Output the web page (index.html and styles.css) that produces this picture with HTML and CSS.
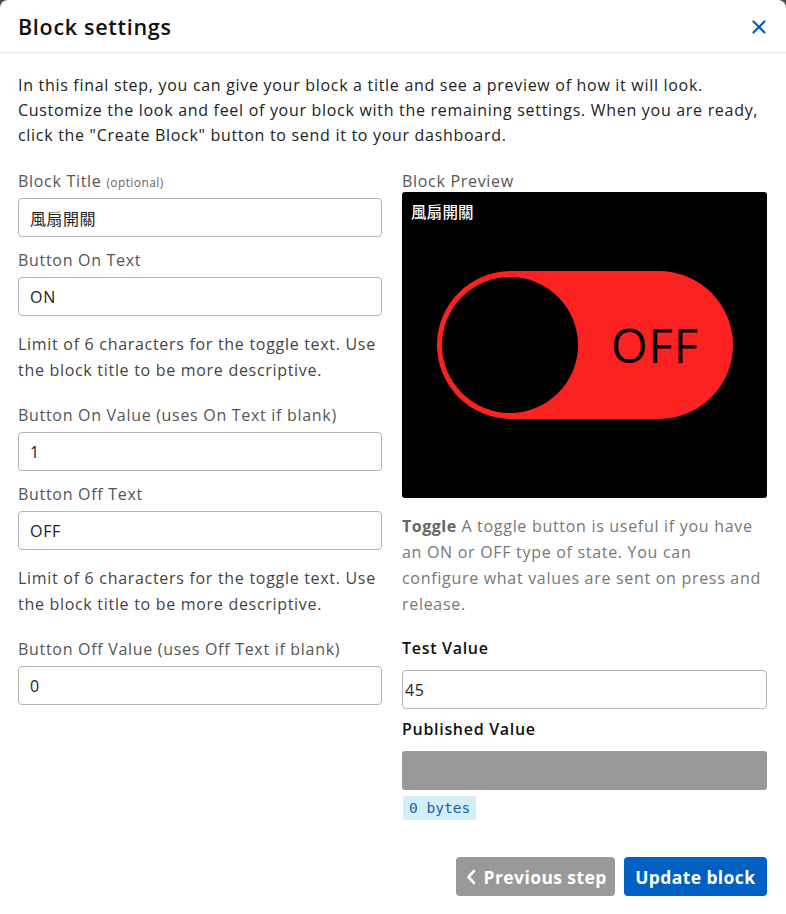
FILE: index.html
```html
<!DOCTYPE html>
<html lang="en">
<head>
<meta charset="utf-8">
<title>Block settings</title>
<link rel="stylesheet" href="styles.css">
</head>
<body>
<div class="modal">
  <header class="modal-header">
    <h1 class="modal-title">Block settings</h1>
    <button class="close" aria-label="Close">
      <svg width="14" height="14" viewBox="0 0 14 14"><path d="M1.5 1.5 L12.5 12.5 M12.5 1.5 L1.5 12.5" stroke="#0b5cad" stroke-width="2.2" stroke-linecap="round" fill="none"/></svg>
    </button>
  </header>
  <div class="modal-body">
    <p class="intro">In this final step, you can give your block a title and see a preview of how it will look. Customize the look and feel of your block with the remaining settings. When you are ready, click the "Create Block" button to send it to your dashboard.</p>
    <div class="columns">
      <div class="col">
        <label class="label">Block Title <small>(optional)</small></label>
        <div class="input cjk">風扇開關</div>
        <label class="label gap-s">Button On Text</label>
        <div class="input">ON</div>
        <p class="help">Limit of 6 characters for the toggle text. Use the block title to be more descriptive.</p>
        <label class="label">Button On Value (uses On Text if blank)</label>
        <div class="input">1</div>
        <label class="label gap-s">Button Off Text</label>
        <div class="input">OFF</div>
        <p class="help">Limit of 6 characters for the toggle text. Use the block title to be more descriptive.</p>
        <label class="label">Button Off Value (uses Off Text if blank)</label>
        <div class="input">0</div>
      </div>
      <div class="col">
        <label class="label">Block Preview</label>
        <div class="preview">
          <div class="preview-title">風扇開關</div>
          <div class="toggle">
            <div class="knob"></div>
            <span class="toggle-text">OFF</span>
          </div>
        </div>
        <p class="desc"><b>Toggle</b> A toggle button is useful if you have an ON or OFF type of state. You can configure what values are sent on press and release.</p>
        <div class="strong-label">Test Value</div>
        <div class="input input-tight">45</div>
        <div class="strong-label pub">Published Value</div>
        <div class="published"></div>
        <span class="badge">0 bytes</span>
      </div>
    </div>
    <div class="footer">
      <button class="btn btn-gray">
        <svg width="10" height="16" viewBox="0 0 10 16"><path d="M8 2 L2.5 8 L8 14" stroke="#fff" stroke-width="2.6" fill="none" stroke-linecap="round" stroke-linejoin="round"/></svg>
        Previous step
      </button>
      <button class="btn btn-blue">Update block</button>
    </div>
  </div>
</div>
</body>
</html>
```

FILE: styles.css
```css
* { box-sizing: border-box; }
html, body { margin: 0; padding: 0; }
body {
  background: #4d4d4d;
  font-family: "Open Sans", "Noto Sans CJK TC", sans-serif;
  letter-spacing: 0.7px;
  width: 786px;
  height: 914px;
  overflow: hidden;
}
.modal {
  background: #fff;
  border-radius: 8px 8px 0 0;
  height: 914px;
  color: #222;
}
.modal-header {
  height: 53px;
  border-bottom: 1px solid #e3e3e3;
  display: flex;
  align-items: center;
  justify-content: space-between;
  padding: 0 20px 0 18px;
}
.modal-title {
  margin: 0;
  font-size: 21.5px;
  font-weight: 600;
  color: #111;
  letter-spacing: 0.7px;
}
.close {
  border: 0;
  background: none;
  padding: 0;
  display: flex;
  margin-top: 2px;
}
.modal-body {
  padding: 20px 19px 0 18px;
}
.intro {
  margin: 0;
  font-size: 16px;
  line-height: 25px;
  color: #222;
}
.columns {
  display: grid;
  grid-template-columns: 364px 365px;
  column-gap: 20px;
  margin-top: 21px;
}
.col { display: flex; flex-direction: column; align-items: flex-start; }
.label {
  display: block;
  height: 24px;
  font-size: 16px;
  line-height: 24px;
  color: #555;
  margin-bottom: 5px;
}
.label small { font-size: 12px; color: #666; letter-spacing: 0.4px; }
.gap-s { margin-top: 11px; }
.input {
  width: 100%;
  height: 39px;
  border: 1px solid #b5b5b5;
  border-radius: 4px;
  padding: 0 11px;
  display: flex;
  align-items: center;
  font-size: 16px;
  color: #222;
}
.cjk { font-family: "Noto Sans CJK TC", sans-serif; font-size: 16px; letter-spacing: 0.5px; }
.help {
  margin: 15px 0 20px;
  font-size: 16px;
  line-height: 26px;
  color: #444;
}
.preview {
  position: relative;
  width: 100%;
  height: 306px;
  margin-top: -6px;
  background: #000;
  border-radius: 3px;
  display: flex;
  align-items: center;
  justify-content: center;
}
.preview-title {
  position: absolute;
  left: 9px;
  top: 10px;
  color: #fff;
  font-family: "Noto Sans CJK TC", sans-serif;
  font-size: 15.5px;
  font-weight: 500;
  line-height: 18px;
  letter-spacing: 0.2px;
}
.toggle {
  width: 296px;
  height: 148px;
  background: #fd2222;
  border-radius: 74px;
  padding: 6px 5px;
  display: flex;
  align-items: center;
  margin-left: 1px;
}
.knob {
  width: 136px;
  height: 136px;
  border-radius: 50%;
  background: #000;
  flex: none;
}
.toggle-text {
  flex: 1;
  text-align: center;
  font-size: 47px;
  font-weight: 500;
  letter-spacing: 1px;
  color: #000;
  margin-left: 4px;
  line-height: 1;
}
.desc {
  margin: 15px 0 0;
  font-size: 16px;
  line-height: 26px;
  color: #777;
}
.desc b { font-weight: 700; color: #666; letter-spacing: 0.5px; }
.strong-label {
  margin-top: 19px;
  font-size: 16px;
  font-weight: 600;
  line-height: 24px;
  color: #111;
}
.input-tight { margin-top: 10px; padding-left: 2px; }
.strong-label.pub { margin-top: 8px; }
.published {
  width: 100%;
  height: 39px;
  margin-top: 10px;
  background: #999;
  border-radius: 3px;
}
.badge {
  margin-top: 6px;
  margin-left: 1px;
  height: 24px;
  padding: 0 6px;
  display: inline-flex;
  align-items: center;
  background: #d3effb;
  color: #1c5ea8;
  font-family: "DejaVu Sans Mono", monospace;
  font-size: 14.5px;
  letter-spacing: 0;
  border-radius: 3px;
}
.footer {
  display: flex;
  justify-content: flex-end;
  gap: 9px;
  margin-top: 37px;
}
.btn {
  height: 39px;
  border: 0;
  border-radius: 4px;
  color: #fff;
  font-family: "Open Sans", sans-serif;
  font-weight: 700;
  font-size: 17.5px;
  letter-spacing: 0.4px;
  display: inline-flex;
  align-items: center;
}
.btn-gray { background: #999; gap: 8px; padding: 0 8px 0 10px; }
.btn-blue { background: #0060c4; padding: 0 11.5px; }
```
